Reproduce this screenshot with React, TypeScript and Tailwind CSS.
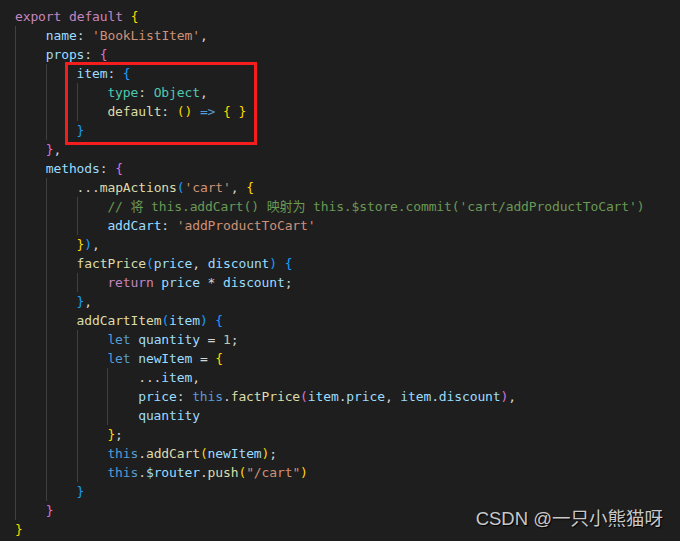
import React from 'react';

type Tok = [string, string];

const C = {
  kw: 'text-[#c586c0]',
  prop: 'text-[#9cdcfe]',
  str: 'text-[#ce9178]',
  type: 'text-[#4ec9b0]',
  blue: 'text-[#569cd6]',
  fn: 'text-[#dcdcaa]',
  cm: 'text-[#6a9955]',
  txt: 'text-[#d4d4d4]',
  num: 'text-[#b5cea8]',
  b1: 'text-[#ffd700]',
  b2: 'text-[#da70d6]',
  b3: 'text-[#179fff]',
};

const Line: React.FC<{ toks: Tok[] }> = ({ toks }) => (
  <div className="h-[19px] leading-[19px] whitespace-pre">
    {toks.map(([cls, text], i) => (
      <span key={i} className={cls}>
        {text}
      </span>
    ))}
  </div>
);

const Block: React.FC<{ children: React.ReactNode }> = ({ children }) => (
  <div className="border-l border-[#404040] pl-[29.8px]">{children}</div>
);

const t = (text: string): Tok => [C.txt, text];

const App: React.FC = () => {
  return (
    <div className="relative w-[680px] h-[541px] overflow-hidden bg-[#1e1e1e]">
      <div
        className="pt-[7px] pl-[15px] text-[13px] tracking-[-0.12px]"
        style={{ fontFamily: '"DejaVu Sans Mono", "Noto Sans CJK SC", monospace' }}
      >
        <Line toks={[[C.kw, 'export'], t(' '), [C.kw, 'default'], t(' '), [C.b1, '{']]} />
        <Block>
          <Line toks={[[C.prop, 'name'], t(': '), [C.str, "'BookListItem'"], t(',')]} />
          <Line toks={[[C.prop, 'props'], t(': '), [C.b2, '{']]} />
          <Block>
            <Line toks={[[C.prop, 'item'], t(': '), [C.b3, '{']]} />
            <Block>
              <Line toks={[[C.type, 'type'], t(': '), [C.type, 'Object'], t(',')]} />
              <Line
                toks={[
                  [C.fn, 'default'],
                  t(': '),
                  [C.b1, '()'],
                  t(' '),
                  [C.blue, '=>'],
                  t(' '),
                  [C.b1, '{ }'],
                ]}
              />
            </Block>
            <Line toks={[[C.b3, '}']]} />
          </Block>
          <Line toks={[[C.b2, '}'], t(',')]} />
          <Line toks={[[C.prop, 'methods'], t(': '), [C.b2, '{']]} />
          <Block>
            <Line
              toks={[
                t('...'),
                [C.fn, 'mapActions'],
                [C.b3, '('],
                [C.str, "'cart'"],
                t(', '),
                [C.b1, '{'],
              ]}
            />
            <Block>
              <Line
                toks={[[C.cm, "// 将 this.addCart() 映射为 this.$store.commit('cart/addProductToCart')"]]}
              />
              <Line toks={[[C.prop, 'addCart'], t(': '), [C.str, "'addProductToCart'"]]} />
            </Block>
            <Line toks={[[C.b1, '}'], [C.b3, ')'], t(',')]} />
            <Line
              toks={[
                [C.fn, 'factPrice'],
                [C.b3, '('],
                [C.prop, 'price'],
                t(', '),
                [C.prop, 'discount'],
                [C.b3, ')'],
                t(' '),
                [C.b3, '{'],
              ]}
            />
            <Block>
              <Line
                toks={[[C.kw, 'return'], t(' '), [C.prop, 'price'], t(' * '), [C.prop, 'discount'], t(';')]}
              />
            </Block>
            <Line toks={[[C.b3, '}'], t(',')]} />
            <Line
              toks={[[C.fn, 'addCartItem'], [C.b3, '('], [C.prop, 'item'], [C.b3, ')'], t(' '), [C.b3, '{']]}
            />
            <Block>
              <Line toks={[[C.blue, 'let'], t(' '), [C.prop, 'quantity'], t(' = '), [C.num, '1'], t(';')]} />
              <Line toks={[[C.blue, 'let'], t(' '), [C.prop, 'newItem'], t(' = '), [C.b1, '{']]} />
              <Block>
                <Line toks={[t('...'), [C.prop, 'item'], t(',')]} />
                <Line
                  toks={[
                    [C.prop, 'price'],
                    t(': '),
                    [C.blue, 'this'],
                    t('.'),
                    [C.fn, 'factPrice'],
                    [C.b2, '('],
                    [C.prop, 'item'],
                    t('.'),
                    [C.prop, 'price'],
                    t(', '),
                    [C.prop, 'item'],
                    t('.'),
                    [C.prop, 'discount'],
                    [C.b2, ')'],
                    t(','),
                  ]}
                />
                <Line toks={[[C.prop, 'quantity']]} />
              </Block>
              <Line toks={[[C.b1, '}'], t(';')]} />
              <Line
                toks={[[C.blue, 'this'], t('.'), [C.fn, 'addCart'], [C.b1, '('], [C.prop, 'newItem'], [C.b1, ')'], t(';')]}
              />
              <Line
                toks={[
                  [C.blue, 'this'],
                  t('.'),
                  [C.prop, '$router'],
                  t('.'),
                  [C.fn, 'push'],
                  [C.b1, '('],
                  [C.str, '"/cart"'],
                  [C.b1, ')'],
                ]}
              />
            </Block>
            <Line toks={[[C.b3, '}']]} />
          </Block>
          <Line toks={[[C.b2, '}']]} />
        </Block>
        <Line toks={[[C.b1, '}']]} />
      </div>

      {/* highlight box */}
      <div className="absolute left-[65px] top-[62px] w-[192px] h-[83px] border-[3px] border-[#f51d1d]" />

      {/* watermark */}
      <div
        className="absolute right-[17px] top-[507px] text-[18.5px] leading-[24px] text-[#c8c8c8] [text-shadow:1px_1px_1px_#000]"
        style={{ fontFamily: '"Liberation Sans", "Noto Sans CJK SC", sans-serif' }}
      >
        CSDN @一只小熊猫呀
      </div>
    </div>
  );
};

export default App;
